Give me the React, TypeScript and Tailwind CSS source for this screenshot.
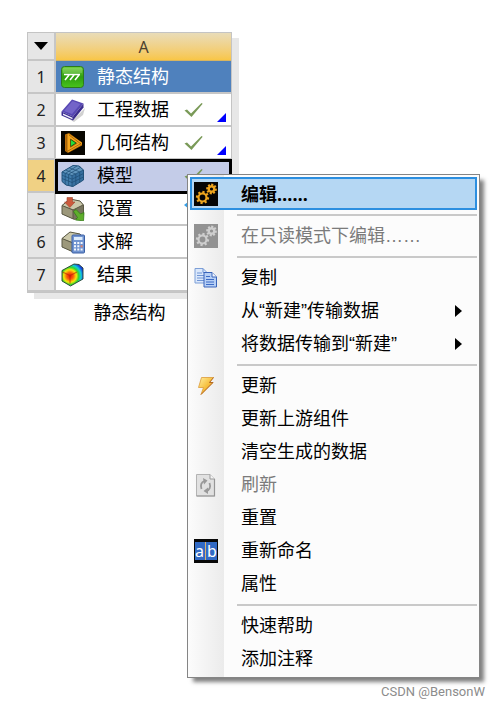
import type { ReactNode } from "react";
import clsx from "clsx";

function StructureIcon() {
  return (
    <svg width="24" height="24" viewBox="0 0 24 24" aria-hidden="true">
      <defs>
        <linearGradient id="green" x1="0" y1="0" x2="0" y2="1">
          <stop offset="0" stopColor="#72d13c" />
          <stop offset="0.5" stopColor="#2f9e10" />
          <stop offset="1" stopColor="#49c41c" />
        </linearGradient>
      </defs>
      <rect x="0.5" y="1.5" width="22" height="21" rx="3" fill="url(#green)" stroke="#2c7a1c" />
      <path d="M2 3h19v5H2z" fill="#ffffff" opacity="0.16" />
      <path d="M3 9.5h16M8 10l-4 5M13 10l-4 5M18 10l-4 5" stroke="#fff" strokeWidth="1.6" fill="none" />
    </svg>
  );
}

function BookIcon() {
  return (
    <svg width="24" height="24" viewBox="0 0 24 24" aria-hidden="true">
      <path d="M3 18l9 4 12-12-2 7-9 7z" fill="#999" opacity="0.45" />
      <path d="M0.500 13.500L11 1.500l11.500 4L12 18.500z" fill="#5747b3" />
      <path d="M3 13L11.500 3l8 3L11 16z" fill="#7364c8" />
      <path d="M0.500 13.500l11.500 5v4l-11.500-5z" fill="#3d2f93" />
      <path d="M2 15.500l9.500 4.200v1.500L2 17z" fill="#f3f2fa" />
      <path d="M12 18.500l10.500-13v4L12 22.500z" fill="#3c2d8c" />
    </svg>
  );
}

function GeometryIcon() {
  return (
    <svg width="24" height="24" viewBox="0 0 24 24" aria-hidden="true">
      <path d="M0 0h24v24H0z" fill="#080600" />
      <path d="M4 3.500L8 2l13 9.500v3L7 22l-3-2z" fill="#b96d08" />
      <path d="M7.500 4.500v15l12-7z" fill="none" stroke="#f5a51c" strokeWidth="3" strokeLinejoin="round" />
      <path d="M6 4v16M8 4l12 9M6 20.500L20 12.500" stroke="#8a5206" strokeWidth="0.7" />
      <path d="M9.500 8v8l6-4z" fill="#063d0b" />
      <path d="M10 9v6l4.500-3z" fill="#24df3a" />
    </svg>
  );
}

function MeshIcon() {
  return (
    <svg width="24" height="24" viewBox="0 0 24 24" aria-hidden="true">
      <path d="M1 8L12 1.500l6 .5 4.500 4v10L12 22.500 5 21l-4-3.500z" fill="#366f9f" />
      <path d="M1 8L12 1.500l6 .5 4.500 4L11 11.500z" fill="#6297bf" />
      <path d="M1 8l10 3.500v11L5 21l-4-3.500z" fill="#417cac" />
      <path
        d="M1 8l10 3.500L22.500 6M11 11.500v11M4.200 9.300v11M7.600 10.500v11.200M1 11.200l10 4L22.500 9.500M1 14.500l10 4L22.500 13M14.800 10v11M18.700 8v11M4.500 6l10 4M8.300 3.800l10.200 4M5 9l11-7M8 10l12-7"
        fill="none"
        stroke="#1d4c74"
        strokeWidth="0.7"
      />
      <path d="M1 8L12 1.500l6 .5 4.500 4v10L12 22.500 5 21l-4-3.500z" fill="none" stroke="#22527a" />
    </svg>
  );
}

function Block() {
  return (
    <>
      <path d="M1 8.500L9 2l10 2 3.500 4v10l-9 4.500L1 17z" fill="#77745d" />
      <path d="M1 8.500L9 2l10 2 3 4-9.500 4.500z" fill="#cbc8aa" />
      <path d="M1 8.500l11 4.500v9L1 17z" fill="#9c987b" />
      <path d="M1 8.500L9 2l10 2 3.500 4v10l-9 4.500L1 17zM1 8.500l11 4.500 10-5M12 13v9" fill="none" stroke="#5b5945" strokeWidth="1" />
    </>
  );
}

function SetupIcon() {
  return (
    <svg width="24" height="24" viewBox="0 0 24 24" aria-hidden="true">
      <Block />
      <path d="M6 0.500h5.500V5H14l-5.200 5.500L3.500 5H6z" fill="#cc5a3c" stroke="#a04630" strokeWidth="0.6" />
      <path d="M12.500 14.500l2.500-2 4.500 4.500 3.500-1.500-.5 8.300-8-.8 2-2.500z" fill="#5fae2c" stroke="#347c17" strokeWidth="0.8" />
    </svg>
  );
}

function SolutionIcon() {
  return (
    <svg width="24" height="24" viewBox="0 0 24 24" aria-hidden="true">
      <Block />
      <rect x="11" y="5" width="12.500" height="18" rx="1" fill="#7194d0" stroke="#3a5fa5" />
      <path d="M13 7h8.500v3H13z" fill="#dcebfb" />
      <path d="M13 12h2v2h-2zM16.300 12h2v2h-2zM19.600 12h2v2h-2zM13 15.300h2v2h-2zM16.300 15.300h2v2h-2zM13 18.600h2v2h-2zM16.300 18.600h2v2h-2zM19.600 18.600h2v2h-2z" fill="#f5f8fd" />
      <path d="M19.600 15.300h2v2h-2z" fill="#e48268" />
    </svg>
  );
}

function ResultIcon() {
  return (
    <svg width="24" height="24" viewBox="0 0 24 24" aria-hidden="true">
      <defs>
        <radialGradient id="contour" gradientUnits="userSpaceOnUse" cx="9" cy="13" r="15">
          <stop offset="0" stopColor="#e51a0b" />
          <stop offset="0.22" stopColor="#fb5e08" />
          <stop offset="0.42" stopColor="#f7e50b" />
          <stop offset="0.58" stopColor="#31d62d" />
          <stop offset="0.74" stopColor="#13cbdc" />
          <stop offset="0.92" stopColor="#173de0" />
        </radialGradient>
      </defs>
      <path d="M1 7.500L13 1l5 .5 4 3.500v11L9.500 23 1 18z" fill="url(#contour)" stroke="#24402a" strokeWidth="0.9" />
      <path d="M1.500 9L9 12.500 16 9M9 12.500v8" fill="none" stroke="#b81b08" strokeWidth="1.200" opacity="0.6" />
    </svg>
  );
}

const TEETH = [0, 45, 90, 135, 180, 225, 270, 315];

function Gear({ x, y, r, color }: { x: number; y: number; r: number; color: string }) {
  return (
    <g transform={`translate(${x} ${y})`}>
      <circle r={r} fill="none" stroke={color} strokeWidth="2.200" />
      {TEETH.map((angle) => (
        <path key={angle} d={`M0 ${-r}V${-r - 2.6}`} stroke={color} strokeWidth="2.200" transform={`rotate(${angle + 10})`} />
      ))}
    </g>
  );
}

function GearsIcon({ disabled = false }: { disabled?: boolean }) {
  const color = disabled ? "#cecece" : "#eda41e";
  return (
    <svg width="24" height="24" viewBox="0 0 24 24" aria-hidden="true">
      <path d="M0 0h24v24H0z" fill={disabled ? "#929292" : "#050505"} />
      <Gear x={8.5} y={15.5} r={4} color={color} />
      <Gear x={17.5} y={7} r={2.7} color={color} />
    </svg>
  );
}

function CopyIcon() {
  return (
    <svg width="24" height="24" viewBox="0 0 24 24" aria-hidden="true">
      <path d="M1 2.500h8l4 4V17H1z" fill="#dbe8fb" stroke="#7d9fd7" />
      <path d="M9 2.500v4h4M3 7h5M3 9.500h8M3 12h8M3 14.500h8" fill="none" stroke="#6f94d4" />
      <path d="M10 6.500h8l4.500 4.500v10H10z" fill="#b6cff5" stroke="#3a65bb" />
      <path d="M18 6.500V11h4.500" fill="#f5f9ff" stroke="#3a65bb" />
      <path d="M12 10.500h4M12 13.500h8M12 16h8M12 18.500h8" stroke="#3c6bc6" />
    </svg>
  );
}

function UpdateIcon() {
  return (
    <svg width="24" height="24" viewBox="0 0 24 24" aria-hidden="true">
      <defs>
        <linearGradient id="bolt" x1="0" y1="0" x2="1" y2="1">
          <stop offset="0" stopColor="#fff0a2" />
          <stop offset="0.55" stopColor="#f6bd39" />
          <stop offset="1" stopColor="#c96f18" />
        </linearGradient>
      </defs>
      <path d="M7.500 3.500h12l-4 5H19L7 20.500l2.500-7H4.500z" fill="url(#bolt)" stroke="#dc9a38" strokeWidth="0.8" />
      <path d="M19.500 3.500l-4 5H19L7 20.500" fill="none" stroke="#a95c1c" strokeWidth="0.8" />
    </svg>
  );
}

function RefreshIcon() {
  return (
    <svg width="24" height="24" viewBox="0 0 24 24" aria-hidden="true">
      <path d="M2.500 1.500H16l4.500 4.500v17h-18z" fill="#e1e1e1" stroke="#b3b3b3" />
      <path d="M20.500 6v17h-18" fill="none" stroke="#969696" strokeWidth="1.200" />
      <path d="M16 1.500V6h4.500" fill="#f4f4f4" stroke="#999" />
      <path d="M7.500 16c-1.500-4 0-7 3-8M15.500 10c1.500 4 0 7-3 8" fill="none" stroke="#999" strokeWidth="1.800" />
      <path d="M9 5l4.500 2.500L10 11.500zM14 14.500L9.500 18l4.500 3z" fill="#999" />
    </svg>
  );
}

function RenameIcon() {
  return (
    <svg width="24" height="24" viewBox="0 0 24 24" aria-hidden="true">
      <path d="M0 0h24v24H0z" fill="#080808" />
      <path d="M1 3h22v18H1z" fill="#316ac5" />
      <text x="1" y="18" fill="#fff" fontSize="16" fontFamily="Noto Sans">a</text>
      <text x="13" y="18" fill="#fff" fontSize="16" fontFamily="Noto Sans">b</text>
      <path d="M11.500 3v18" stroke="#d8b16d" />
    </svg>
  );
}

function CheckMark() {
  return (
    <svg width="20" height="18" viewBox="0 0 20 18" role="img" aria-label="OK">
      <path d="M0.500 9.500L3 8.500l4 4L17.500 2l1.200.8L7.500 16z" fill="#7a9a58" />
    </svg>
  );
}

function PendingMark() {
  return (
    <svg width="20" height="18" viewBox="0 0 20 18" aria-hidden="true">
      <path d="M0 5l4-3 5 1-4 6z" fill="#35a0e8" />
    </svg>
  );
}

interface Cell {
  label: string;
  icon: ReactNode;
  status?: "ok" | "pending";
  shared?: boolean;
}

const cells: Cell[] = [
  { label: "静态结构", icon: <StructureIcon /> },
  { label: "工程数据", icon: <BookIcon />, status: "ok", shared: true },
  { label: "几何结构", icon: <GeometryIcon />, status: "ok", shared: true },
  { label: "模型", icon: <MeshIcon />, status: "ok" },
  { label: "设置", icon: <SetupIcon />, status: "pending" },
  { label: "求解", icon: <SolutionIcon /> },
  { label: "结果", icon: <ResultIcon /> },
];

interface MenuItem {
  label: string;
  icon?: ReactNode;
  active?: boolean;
  disabled?: boolean;
  submenu?: boolean;
}

const menuGroups: MenuItem[][] = [
  [{ label: "编辑……", icon: <GearsIcon />, active: true }],
  [{ label: "在只读模式下编辑……", icon: <GearsIcon disabled />, disabled: true }],
  [
    { label: "复制", icon: <CopyIcon /> },
    { label: "从“新建”传输数据", submenu: true },
    { label: "将数据传输到“新建”", submenu: true },
  ],
  [
    { label: "更新", icon: <UpdateIcon /> },
    { label: "更新上游组件" },
    { label: "清空生成的数据" },
    { label: "刷新", icon: <RefreshIcon />, disabled: true },
    { label: "重置" },
    { label: "重新命名", icon: <RenameIcon /> },
    { label: "属性" },
  ],
  [{ label: "快速帮助" }, { label: "添加注释" }],
];

function SystemTable() {
  return (
    <table className="w-[205px] table-fixed border-separate border-spacing-0 border border-[#c4c4c4] shadow-[7px_6px_0_#e7e7e7]">
      <thead>
        <tr className="h-7">
          <th className="w-7 border-r-2 border-b-2 border-[#c6c6c6] bg-[#e6e6e6] p-0">
            <button className="flex h-6 w-full items-center justify-center" aria-label="系统菜单">
              <svg width="14" height="8" viewBox="0 0 14 8">
                <path d="M0 0h14L7 8z" fill="#000" />
              </svg>
            </button>
          </th>
          <th className="border-b border-[#d8b560] bg-linear-to-b from-[#e9dcb8] to-[#f8c646] p-0 font-['Noto_Sans'] text-base leading-6 font-normal text-[#4b4030]">
            A
          </th>
        </tr>
      </thead>
      <tbody>
        {cells.map((cell, i) => {
          const selected = i === 3;
          return (
            <tr key={cell.label} className="h-[33px]">
              <th
                scope="row"
                className={clsx(
                  "border-r-2 border-b-2 border-[#c6c6c6] p-0 font-['Noto_Sans'] text-base leading-6 font-normal text-[#222]",
                  selected ? "bg-[#f0d184]" : "bg-[#e6e6e6]",
                )}>
                {i + 1}
              </th>
              <td
                className={clsx(
                  "border-b-2 border-[#c6c6c6] p-0",
                  i === 0 && "bg-[#4f81bd] text-white",
                  selected && "bg-[#c4cce8] outline-3 -outline-offset-2 outline-black",
                  i > 0 && !selected && "bg-white",
                )}>
                <div className="flex items-center pr-[5px] pl-[5px]">
                  {cell.icon}
                  <span className="ml-3 flex-1 leading-6">{cell.label}</span>
                  {cell.status === "ok" && <CheckMark />}
                  {cell.status === "pending" && <PendingMark />}
                  <span className="flex w-[22px] justify-end self-end">
                    {cell.shared && (
                      <svg width="9" height="9" viewBox="0 0 9 9" aria-hidden="true">
                        <path d="M9 0v9H0z" fill="#0000ff" />
                      </svg>
                    )}
                  </span>
                </div>
              </td>
            </tr>
          );
        })}
      </tbody>
    </table>
  );
}

function ContextMenu() {
  return (
    <div
      role="menu"
      className="absolute top-[174px] left-[187px] w-[293px] border border-[#858585] bg-[#fcfcfc] bg-linear-to-r from-[#fcfcfc] to-[#ebebeb] bg-[length:36px_100%] bg-no-repeat p-[2px] shadow-[5px_5px_4px_-1px_rgba(0,0,0,0.5)]">
      {menuGroups.map((group, g) => (
        <div key={g}>
          {g > 0 && (
            <div role="separator" className="ml-[47px] flex h-[9px] items-center">
              <div className="h-[2px] w-full bg-[#c9c9c9]" />
            </div>
          )}
          {group.map((item) => (
            <button
              key={item.label}
              role="menuitem"
              disabled={item.disabled}
              className={clsx(
                "flex h-[33px] w-full items-center border-2 pl-[2px] text-left leading-6",
                item.active ? "border-[#2c8fe0] bg-[#b5d7f3] font-['Noto_Sans','Noto_Sans_CJK_SC',sans-serif] font-bold" : "border-transparent",
                item.disabled ? "text-[#7b7b7b]" : "text-black",
              )}>
              <span className="w-6 shrink-0">{item.icon}</span>
              <span className="ml-[23px] flex-1">{item.label}</span>
              {item.submenu && (
                <svg width="7" height="12" viewBox="0 0 7 12" className="mr-[13px]" aria-hidden="true">
                  <path d="M0 0l7 6-7 6z" fill="#000" />
                </svg>
              )}
            </button>
          ))}
        </div>
      ))}
    </div>
  );
}

export default function App() {
  return (
    <div className="relative flex min-h-screen flex-col bg-white font-['Liberation_Sans','Noto_Sans_CJK_SC',sans-serif] text-lg text-black">
      <div className="flex w-fit flex-col items-center px-[27px] pt-8">
        <SystemTable />
        <p className="mt-2 leading-6">静态结构</p>
      </div>
      <ContextMenu />
      <footer className="mt-auto pr-[15px] pb-1 text-right font-[Roboto,sans-serif] text-[13px] leading-5 text-[#8c8c8c]">
        CSDN @BensonW
      </footer>
    </div>
  );
}
